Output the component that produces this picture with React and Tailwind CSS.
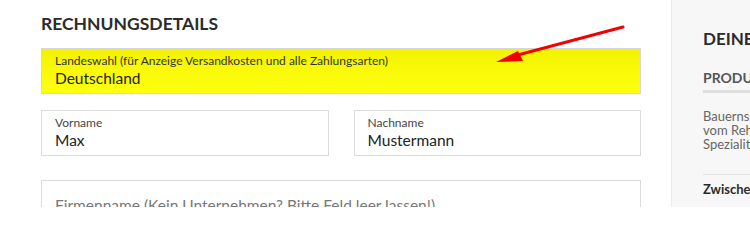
import React from "react";

function Field({ label, value, className = "" }) {
  return (
    <div className={`border border-[#dcdcdc] bg-white h-[46px] px-[13px] pt-[5px] flex flex-col ${className}`}>
      <span className="text-[12px] leading-[14px] text-[#444]">{label}</span>
      <span className="text-[15.5px] leading-[20px] text-[#222]">{value}</span>
    </div>
  );
}

export default function App() {
  return (
    <div className="w-[750px] h-[207px] overflow-hidden bg-white flex relative" style={{ fontFamily: "Lato, 'Open Sans', sans-serif" }}>
      <div className="w-[671px] shrink-0 pl-[41px] pr-[30px] pt-[13px]">
        <h2 className="text-[17.5px] leading-[22px] font-bold text-[#2b2b2b] uppercase">Rechnungsdetails</h2>
        <div className="mt-[13px] h-[46px] border border-[#d6d6d6] bg-gradient-to-b from-[#f3f300] to-[#ffff10] px-[13px] pt-[5px] flex flex-col">
          <span className="text-[12px] leading-[14px] text-[#333]">Landeswahl (für Anzeige Versandkosten und alle Zahlungsarten)</span>
          <span className="text-[15.5px] leading-[20px] text-[#222]">Deutschland</span>
        </div>
        <div className="mt-[16px] flex gap-[25px]">
          <Field label="Vorname" value="Max" className="flex-1" />
          <Field label="Nachname" value="Mustermann" className="flex-1" />
        </div>
        <div className="mt-[24px] h-[46px] border border-[#dcdcdc] px-[13px] pt-[12px]">
          <span className="text-[15.5px] leading-[20px] text-[#777]">Firmenname (Kein Unternehmen? Bitte Feld leer lassen!)</span>
        </div>
      </div>
      <div className="flex-1 bg-[#f7f7f7] border-l border-[#ececec] pl-[31px] pt-[29px] whitespace-nowrap">
        <div className="text-[17px] leading-[20px] font-bold text-[#2b2b2b] uppercase">Deine Bestellung</div>
        <div className="mt-[21px] text-[14px] leading-[16px] font-bold text-[#555] uppercase">Produkt</div>
        <div className="mt-[4px] h-[3px] bg-[#e0e0e0]"></div>
        <div className="mt-[16px] text-[13px] leading-[14px] text-[#666]">
          <div>Bauernspeck</div>
          <div>vom Rehbock</div>
          <div>Spezialität</div>
        </div>
        <div className="mt-[23px] h-px bg-[#e2e2e2]"></div>
        <div className="mt-[7px] text-[13px] leading-[14px] font-bold text-[#2b2b2b]">Zwischensumme</div>
      </div>
      <svg className="absolute left-0 top-0 pointer-events-none" width="750" height="207" viewBox="0 0 750 207">
        <line x1="623" y1="27" x2="510" y2="57" stroke="#f40000" strokeWidth="3" strokeLinecap="round" />
        <polygon points="496,62 518,51 523,61" fill="#f40000" />
      </svg>
    </div>
  );
}
